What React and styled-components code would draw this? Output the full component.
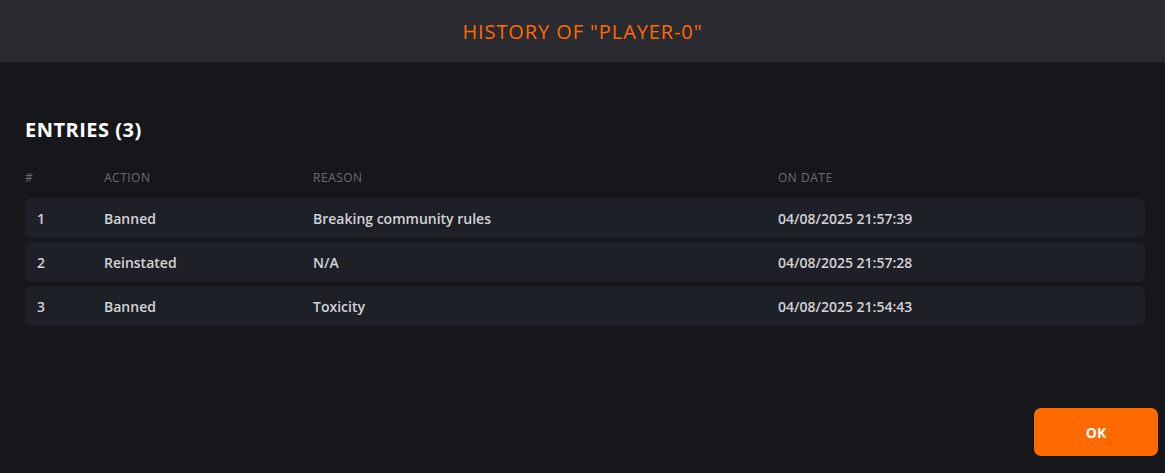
import styled, { createGlobalStyle } from "styled-components";

const GlobalStyle = createGlobalStyle`
  html, body {
    margin: 0;
    padding: 0;
    background: #16171b;
  }
  body {
    font-family: "Open Sans", "Lato", sans-serif;
  }
`;

const Page = styled.div`
  display: flex;
  flex-direction: column;
  width: 100%;
  height: 473px;
  background-color: #16171b;
`;

const Header = styled.header`
  display: flex;
  justify-content: center;
  align-items: center;
  height: 62px;
  background-color: #2a2b30;

  h1 {
    margin: 0;
    font-size: 20px;
    font-weight: 500;
    letter-spacing: 0.9px;
    color: #ff6a00;
  }
`;

const Content = styled.main`
  flex: 1;
  padding: 55px 20px 0 25px;
`;

const Title = styled.h2`
  margin: 0 0 26px;
  font-size: 20px;
  line-height: 26px;
  font-weight: 700;
  letter-spacing: 0.5px;
  color: #ffffff;
`;

const COLUMNS = "79px 209px 465px 1fr";

const HeadRow = styled.div`
  display: grid;
  grid-template-columns: ${COLUMNS};
  height: 16px;
  align-items: center;
  margin-bottom: 13px;
  font-size: 12px;
  letter-spacing: 0.5px;
  color: #6b6c72;
  text-transform: uppercase;
`;

const Rows = styled.div`
  display: flex;
  flex-direction: column;
  gap: 4px;
`;

const Row = styled.div`
  display: grid;
  grid-template-columns: ${COLUMNS};
  align-items: center;
  height: 40px;
  padding-top: 1px;
  box-sizing: border-box;
  border-radius: 7px;
  background-color: #1e2027;
  font-size: 14px;
  font-weight: 600;
  color: #d2d3d6;
`;

const Cell = styled.span`
  padding-left: ${(props) => (props.$first ? "12px" : "0")};
`;

const Footer = styled.footer`
  display: flex;
  justify-content: flex-end;
  padding: 0 7px 17px 0;
`;

const OkButton = styled.button`
  width: 124px;
  height: 48px;
  border: none;
  border-radius: 7px;
  background-color: #ff6a00;
  color: #ffffff;
  font-family: inherit;
  font-size: 14px;
  font-weight: 700;
  cursor: pointer;
`;

const entries = [
  { id: 1, action: "Banned", reason: "Breaking community rules", date: "04/08/2025 21:57:39" },
  { id: 2, action: "Reinstated", reason: "N/A", date: "04/08/2025 21:57:28" },
  { id: 3, action: "Banned", reason: "Toxicity", date: "04/08/2025 21:54:43" },
];

const App = () => {
  return (
    <>
      <GlobalStyle />
      <Page>
        <Header>
          <h1>HISTORY OF "PLAYER-0"</h1>
        </Header>
        <Content>
          <Title>ENTRIES ({entries.length})</Title>
          <HeadRow>
            <span>#</span>
            <span>Action</span>
            <span>Reason</span>
            <span>On date</span>
          </HeadRow>
          <Rows>
            {entries.map((entry) => (
              <Row key={entry.id}>
                <Cell $first>{entry.id}</Cell>
                <Cell>{entry.action}</Cell>
                <Cell>{entry.reason}</Cell>
                <Cell>{entry.date}</Cell>
              </Row>
            ))}
          </Rows>
        </Content>
        <Footer>
          <OkButton>OK</OkButton>
        </Footer>
      </Page>
    </>
  );
};

export default App;
